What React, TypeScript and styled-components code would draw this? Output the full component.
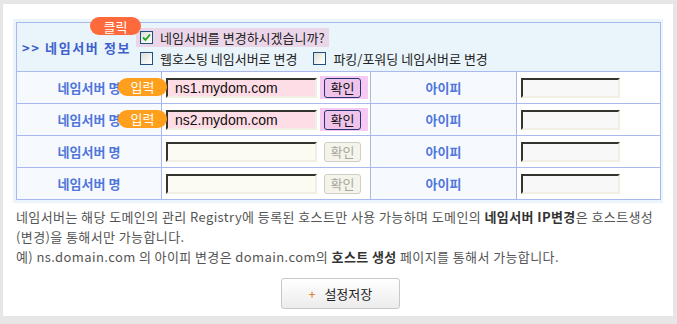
import React from "react";
import styled, { createGlobalStyle } from "styled-components";

const GlobalStyle = createGlobalStyle`
  body {
    margin: 0;
    background: #e6e6e6;
    font-family: "Noto Sans CJK KR", "Noto Sans", sans-serif;
    font-size: 13px;
  }
`;

const Frame = styled.div`
  margin: 4px 4px 0 3px;
  height: 312px;
  box-sizing: border-box;
  padding: 15px 10px 0 10px;
  background: #ffffff;
`;

const TableWrap = styled.div`
  width: 650px;
  box-sizing: border-box;
  padding: 3px;
  background: #eaf5fb;
`;

const Table = styled.table`
  width: 644px;
  border-collapse: collapse;
  table-layout: fixed;
  border: 1px solid #a9b9ee;

  td {
    border: 1px solid #a9b9ee;
    padding: 0;
  }
`;

const HeaderCell = styled.td`
  height: 48px;
  background: #e9f5fb;
`;

const HeaderInner = styled.div`
  display: flex;
  align-items: center;
`;

const Title = styled.div`
  width: 114px;
  padding-left: 5px;
  font-weight: bold;
  letter-spacing: 1.6px;
  color: #3d60cc;
  white-space: nowrap;
`;

const Options = styled.div`
  position: relative;
  display: flex;
  flex-direction: column;
  gap: 2px;
  padding-top: 2px;
`;

const OptionLine = styled.div<{ $highlight?: boolean }>`
  display: inline-flex;
  align-items: center;
  align-self: flex-start;
  height: 19px;
  padding: 0 4px;
  background: ${(p) => (p.$highlight ? "#ebd6e9" : "transparent")};
`;

const Option = styled.label`
  display: inline-flex;
  align-items: center;
  gap: 7px;
  margin-right: 16px;
  color: #222;
  white-space: nowrap;

  &:last-child {
    margin-right: 0;
  }
`;

const Box = styled.span`
  display: inline-flex;
  align-items: center;
  justify-content: center;
  width: 11px;
  height: 11px;
  border: 1px solid #1c5180;
  background: linear-gradient(135deg, #dcdcd6 0%, #f4f4f0 60%, #ffffff 100%);
`;

const Badge = styled.span<{ $color: string }>`
  position: absolute;
  display: inline-flex;
  align-items: center;
  justify-content: center;
  height: 18px;
  border-radius: 9px;
  background: ${(p) => p.$color};
  color: #ffffff;
  font-size: 13px;
  white-space: nowrap;
`;

const ClickBadge = styled(Badge)`
  left: -46px;
  top: -9px;
  width: 51px;
`;

const InputBadge = styled(Badge)`
  left: -48px;
  top: 0;
  width: 49px;
  z-index: 1;
`;

const LabelCell = styled.td`
  height: 31px;
  background: #f6faff;
  text-align: center;
  font-weight: bold;
  color: #5076db;
  white-space: nowrap;
`;

const FieldCell = styled.td`
  background: #ffffff;
  padding-left: 4px !important;
`;

const FieldRow = styled.div`
  display: flex;
  align-items: center;
`;

const InputBox = styled.span`
  position: relative;
  display: inline-flex;
`;

const TextInput = styled.input<{ $active?: boolean; $w: number }>`
  box-sizing: border-box;
  width: ${(p) => p.$w}px;
  height: 20px;
  margin: 0;
  padding: 0 0 0 7px;
  border: 2px inset #8a877a;
  border-right-color: #f0efe4;
  border-bottom-color: #f0efe4;
  background: ${(p) => (p.$active ? "#ffdde6" : "#fbfbf4")};
  font-family: "Liberation Sans", Arial, sans-serif;
  font-size: 14px;
  color: #111;
  outline: none;
`;

const IpInput = styled(TextInput)`
  background: #f8f8f8;
`;

const ButtonWrap = styled.span<{ $active?: boolean }>`
  display: inline-flex;
  align-items: center;
  height: 23px;
  margin-left: 3px;
  padding: 0 7px 0 4px;
  background: ${(p) => (p.$active ? "#f6c9f2" : "transparent")};
`;

const ConfirmButton = styled.button`
  box-sizing: border-box;
  width: 37px;
  height: 20px;
  margin: 0;
  padding: 0;
  border: 1px solid #233574;
  border-radius: 3px;
  background: #efc3ea;
  color: #111;
  font-family: "Noto Sans CJK KR", sans-serif;
  font-size: 13px;
  line-height: 17px;

  &:disabled {
    border-color: #cfcfc4;
    background: #f4f4ec;
    color: #a8a89c;
  }
`;

const Notice = styled.div`
  padding: 4px 3px 0;
  color: #555;
  font-size: 13px;
  letter-spacing: 0.4px;
  line-height: 20px;
  white-space: nowrap;

  b {
    color: #333;
  }
`;

const Actions = styled.div`
  display: flex;
  justify-content: center;
  padding-left: 5px;
  margin-top: 11px;
`;

const SaveButton = styled.button`
  display: inline-flex;
  align-items: center;
  justify-content: center;
  gap: 9px;
  width: 119px;
  height: 31px;
  border: 1px solid #c8c8c8;
  border-radius: 3px;
  background: linear-gradient(#ffffff, #ececec);
  font-family: "Noto Sans CJK KR", sans-serif;
  font-size: 13px;
  color: #222;

  span {
    color: #e5700c;
    font-size: 12px;
  }
`;

const Check = () => (
  <svg width="9" height="9" viewBox="0 0 9 9">
    <path d="M1 4.5 L3.5 7 L8 1.5" fill="none" stroke="#21a121" strokeWidth="1.8" />
  </svg>
);

const rows = [
  { value: "ns1.mydom.com", active: true },
  { value: "ns2.mydom.com", active: true },
  { value: "", active: false },
  { value: "", active: false },
];

const App: React.FC = () => {
  return (
    <>
      <GlobalStyle />
      <Frame>
        <TableWrap>
          <Table>
            <colgroup>
              <col style={{ width: 145 }} />
              <col style={{ width: 209 }} />
              <col style={{ width: 146 }} />
              <col style={{ width: 144 }} />
            </colgroup>
            <tbody>
              <tr>
                <HeaderCell colSpan={4}>
                  <HeaderInner>
                    <Title>&gt;&gt; 네임서버 정보</Title>
                    <Options>
                      <ClickBadge $color="#ff6a3c">클릭</ClickBadge>
                      <OptionLine $highlight>
                        <Option>
                          <Box>
                            <Check />
                          </Box>
                          네임서버를 변경하시겠습니까?
                        </Option>
                      </OptionLine>
                      <OptionLine>
                        <Option>
                          <Box />
                          웹호스팅 네임서버로 변경
                        </Option>
                        <Option>
                          <Box />
                          파킹/포워딩 네임서버로 변경
                        </Option>
                      </OptionLine>
                    </Options>
                  </HeaderInner>
                </HeaderCell>
              </tr>
              {rows.map((row, i) => (
                <tr key={i}>
                  <LabelCell>네임서버 명</LabelCell>
                  <FieldCell>
                    <FieldRow>
                      <InputBox>
                        {row.active && <InputBadge $color="#ff9f1c">입력</InputBadge>}
                        <TextInput
                          $w={151}
                          $active={row.active}
                          defaultValue={row.value}
                          disabled={!row.active}
                        />
                      </InputBox>
                      <ButtonWrap $active={row.active}>
                        <ConfirmButton disabled={!row.active}>확인</ConfirmButton>
                      </ButtonWrap>
                    </FieldRow>
                  </FieldCell>
                  <LabelCell>아이피</LabelCell>
                  <FieldCell>
                    <FieldRow>
                      <IpInput $w={99} disabled />
                    </FieldRow>
                  </FieldCell>
                </tr>
              ))}
            </tbody>
          </Table>
        </TableWrap>
        <Notice>
          네임서버는 해당 도메인의 관리 Registry에 등록된 호스트만 사용 가능하며 도메인의{" "}
          <b>네임서버 IP변경</b>은 호스트생성
          <br />
          (변경)을 통해서만 가능합니다.
          <br />
          예) ns.domain.com 의 아이피 변경은 domain.com의 <b>호스트 생성</b> 페이지를 통해서
          가능합니다.
        </Notice>
        <Actions>
          <SaveButton>
            <span>+</span>
            설정저장
          </SaveButton>
        </Actions>
      </Frame>
    </>
  );
};

export default App;
